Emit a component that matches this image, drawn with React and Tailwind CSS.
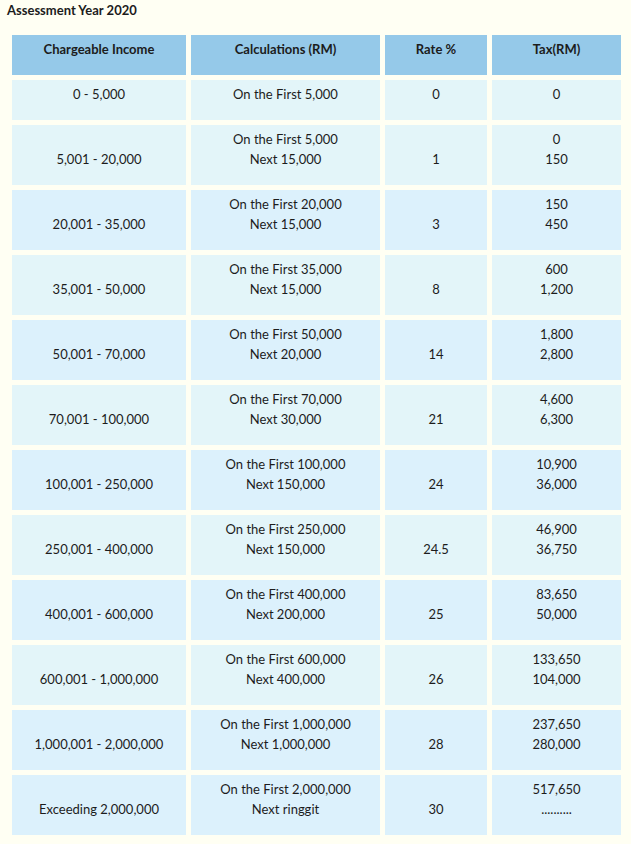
import React from "react";

const rows = [
  { income: "0 - 5,000", calc: ["On the First 5,000"], rate: "0", tax: ["0"] },
  { income: "5,001 - 20,000", calc: ["On the First 5,000", "Next 15,000"], rate: "1", tax: ["0", "150"] },
  { income: "20,001 - 35,000", calc: ["On the First 20,000", "Next 15,000"], rate: "3", tax: ["150", "450"] },
  { income: "35,001 - 50,000", calc: ["On the First 35,000", "Next 15,000"], rate: "8", tax: ["600", "1,200"] },
  { income: "50,001 - 70,000", calc: ["On the First 50,000", "Next 20,000"], rate: "14", tax: ["1,800", "2,800"] },
  { income: "70,001 - 100,000", calc: ["On the First 70,000", "Next 30,000"], rate: "21", tax: ["4,600", "6,300"] },
  { income: "100,001 - 250,000", calc: ["On the First 100,000", "Next 150,000"], rate: "24", tax: ["10,900", "36,000"] },
  { income: "250,001 - 400,000", calc: ["On the First 250,000", "Next 150,000"], rate: "24.5", tax: ["46,900", "36,750"] },
  { income: "400,001 - 600,000", calc: ["On the First 400,000", "Next 200,000"], rate: "25", tax: ["83,650", "50,000"] },
  { income: "600,001 - 1,000,000", calc: ["On the First 600,000", "Next 400,000"], rate: "26", tax: ["133,650", "104,000"] },
  { income: "1,000,001 - 2,000,000", calc: ["On the First 1,000,000", "Next 1,000,000"], rate: "28", tax: ["237,650", "280,000"] },
  { income: "Exceeding 2,000,000", calc: ["On the First 2,000,000", "Next ringgit"], rate: "30", tax: ["517,650", ".........."] },
];

// rows that use the greener cyan tint
const cyanRows = [0, 1, 3, 5, 7, 9];

export default function App() {
  return (
    <div
      className="min-h-screen bg-[#fffff3] text-[#1c1c1c] text-[13px] leading-[20px]"
      style={{ fontFamily: "Lato, 'Noto Sans', sans-serif" }}
    >
      <h1 className="pl-[7px] font-bold text-[13px] leading-[20px]">Assessment Year 2020</h1>

      <table className="mt-[10px] ml-[7px] border-separate border-spacing-[5px] -mx-0 text-center">
        <colgroup>
          <col className="w-[174px]" />
          <col className="w-[189px]" />
          <col className="w-[102px]" />
          <col className="w-[129px]" />
        </colgroup>
        <thead>
          <tr className="bg-[#95c9e9] font-bold">
            <th className="pt-1 pb-4 align-top font-bold">Chargeable Income</th>
            <th className="pt-1 pb-4 align-top font-bold">Calculations (RM)</th>
            <th className="pt-1 pb-4 align-top font-bold">Rate %</th>
            <th className="pt-1 pb-4 align-top font-bold">Tax(RM)</th>
          </tr>
        </thead>
        <tbody>
          {rows.map((r, i) => {
            const two = r.calc.length > 1;
            const bg = cyanRows.includes(i) ? "bg-[#e3f5f9]" : "bg-[#dcf1fc]";
            return (
              <tr key={r.income}>
                <td className={`${bg} pt-1 pb-4 align-top`}>
                  {two && <div>&nbsp;</div>}
                  <div>{r.income}</div>
                </td>
                <td className={`${bg} pt-1 pb-4 align-top`}>
                  {r.calc.map((c) => (
                    <div key={c}>{c}</div>
                  ))}
                </td>
                <td className={`${bg} pt-1 pb-4 align-top`}>
                  {two && <div>&nbsp;</div>}
                  <div>{r.rate}</div>
                </td>
                <td className={`${bg} pt-1 pb-4 align-top`}>
                  {r.tax.map((t, j) => (
                    <div key={j}>{t}</div>
                  ))}
                </td>
              </tr>
            );
          })}
        </tbody>
      </table>
    </div>
  );
}
